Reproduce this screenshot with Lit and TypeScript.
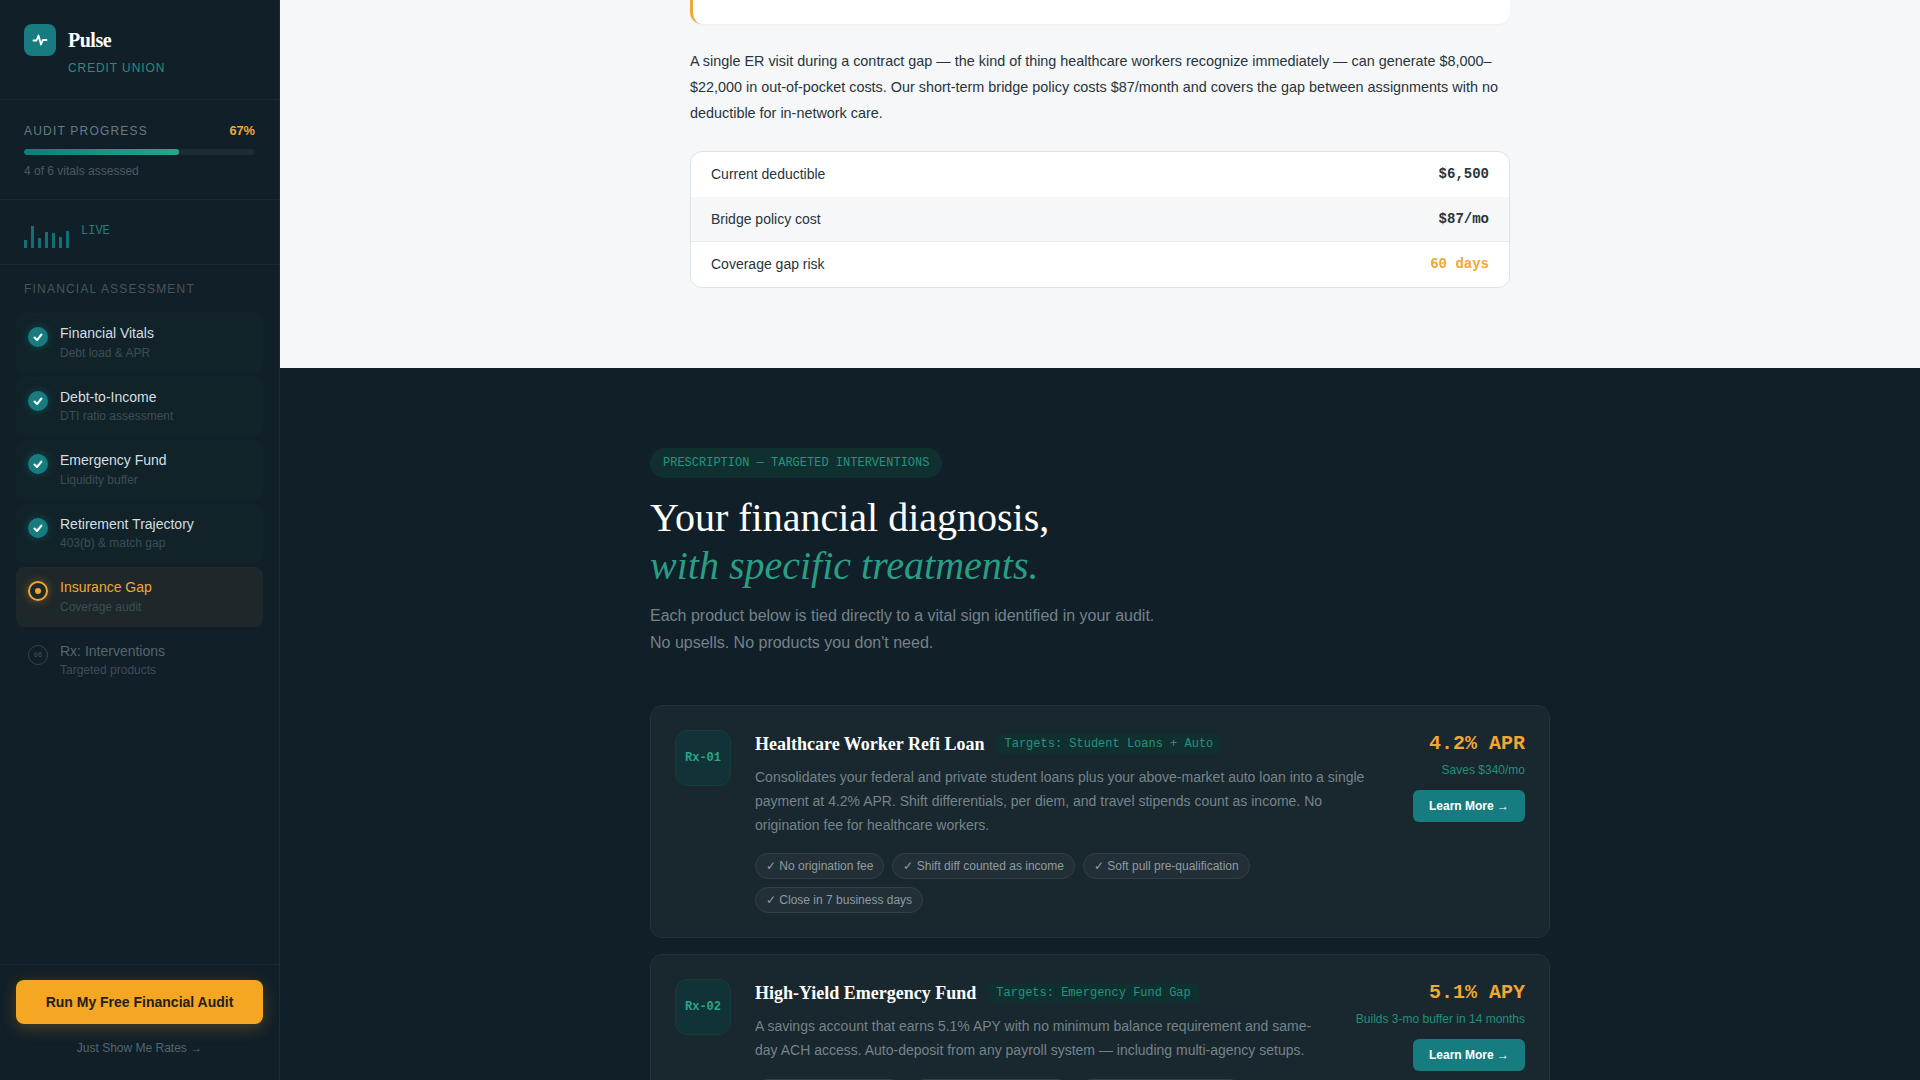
import { LitElement, html, css } from "lit";
import { customElement } from "lit/decorators.js";

const steps = [
  { t: "Financial Vitals", s: "Debt load & APR", st: "done" },
  { t: "Debt-to-Income", s: "DTI ratio assessment", st: "done" },
  { t: "Emergency Fund", s: "Liquidity buffer", st: "done" },
  { t: "Retirement Trajectory", s: "403(b) & match gap", st: "done" },
  { t: "Insurance Gap", s: "Coverage audit", st: "active" },
  { t: "Rx: Interventions", s: "Targeted products", st: "todo" },
];
const bars = [8, 22, 10, 16, 15, 11, 17];
const products = [
  {
    id: "Rx-01", name: "Healthcare Worker Refi Loan", target: "Targets: Student Loans + Auto",
    desc: "Consolidates your federal and private student loans plus your above-market auto loan into a single payment at 4.2% APR. Shift differentials, per diem, and travel stipends count as income. No origination fee for healthcare workers.",
    chips: ["No origination fee", "Shift diff counted as income", "Soft pull pre-qualification", "Close in 7 business days"],
    rate: "4.2% APR", note: "Saves $340/mo",
  },
  {
    id: "Rx-02", name: "High-Yield Emergency Fund", target: "Targets: Emergency Fund Gap",
    desc: "A savings account that earns 5.1% APY with no minimum balance requirement and same-day ACH access. Auto-deposit from any payroll system — including multi-agency setups.",
    chips: ["No minimum balance", "Same-day ACH access", "Multi-agency compatible"],
    rate: "5.1% APY", note: "Builds 3-mo buffer in 14 months",
  },
];

@customElement("app-root")
export class AppRoot extends LitElement {
  static styles = css`
    :host { display: flex; width: 100%; height: 100vh; overflow: hidden; font-family: "Liberation Sans", Arial, sans-serif; background: #f5f7f9; }
    * { box-sizing: border-box; }
    .side { flex: 0 0 280px; height: 100vh; background: #111f28; border-right: 1px solid #1d2c34; display: flex; flex-direction: column; }
    .brand { padding: 24px 24px 20px; border-bottom: 1px solid #1a2a32; height: 100px; }
    .brand-row { display: flex; align-items: center; gap: 12px; height: 32px; }
    .logo { width: 32px; height: 32px; border-radius: 8px; background: #177c80; display: flex; align-items: center; justify-content: center; }
    .pulse { font: 700 20px/24px "Liberation Serif", serif; color: #fff; letter-spacing: -0.5px; }
    .cu { margin: 3.5px 0 0 44px; font-size: 12px; line-height: 16px; letter-spacing: .9px; color: #258f7b; }
    .prog { padding: 21px 24px 0; height: 100px; border-bottom: 1px solid #1a2a32; }
    .prog-top { display: flex; justify-content: space-between; font-size: 12px; line-height: 20px; letter-spacing: 1.2px; color: #6b7a82; }
    .pct { font-size: 12.8px; font-weight: 700; color: #f0a733; letter-spacing: 0; }
    .track { height: 6px; margin-top: 8px; border-radius: 3px; background: #1d2c34; overflow: hidden; }
    .fill { width: 67%; height: 100%; border-radius: 3px; background: linear-gradient(90deg, #0f7c7c, #2aa58a); }
    .pnote { margin-top: 8px; font-size: 12px; line-height: 16px; color: #4a5a63; }
    .live { height: 65px; padding: 24px 24px 0; display: flex; gap: 12px; align-items: flex-start; border-bottom: 1px solid #1a2a32; }
    .bars { display: flex; align-items: flex-end; gap: 4px; height: 24px; }
    .bars i { width: 3px; background: #147074; display: block; }
    .livet { font: 12px/14px "Liberation Mono", monospace; color: #1d8080; }
    .title { padding: 17px 24px 0; font-size: 12px; line-height: 14px; letter-spacing: 1.2px; color: #46565f; margin-bottom: 17px; }
    .steps { display: flex; flex-direction: column; gap: 4px; padding: 0 16px; flex: 1; }
    .step { height: 59.6px; display: flex; gap: 12px; padding: 10px 12px; border-radius: 8px; }
    .step.done { background: #112329; }
    .step.active { background: #1e2729; }
    .dot { flex: 0 0 20px; width: 20px; height: 20px; margin-top: 4px; border-radius: 50%; display: flex; align-items: center; justify-content: center; }
    .done .dot { background: #177c80; box-shadow: 0 0 10px rgba(23, 124, 128, .45); }
    .active .dot { border: 2px solid #f0a733; box-shadow: 0 0 10px rgba(240, 167, 51, .4); }
    .active .dot b { width: 6px; height: 6px; border-radius: 50%; background: #f0a733; }
    .todo .dot { border: 1.5px solid #35454d; color: #46565f; font: 7px "Liberation Mono", monospace; }
    .st { font-size: 14px; line-height: 20px; color: #d5dee2; }
    .ss { font-size: 12px; line-height: 16px; margin-top: 1.5px; color: #3d4d56; }
    .active .st { color: #f0a733; }
    .todo .st { color: #55656e; }
    .foot { height: 116px; padding: 15px 16px 0; border-top: 1px solid #1a2a32; text-align: center; }
    .cta { width: 100%; height: 44px; border: 0; border-radius: 8px; background: #f5a623; color: #241f14; font: 700 14px "Liberation Sans", sans-serif; box-shadow: 0 4px 16px rgba(245, 166, 35, .25); }
    .rates { margin-top: 16px; font-size: 12px; line-height: 16px; color: #55656e; }

    .main { flex: 1; min-width: 0; height: 100vh; overflow: hidden; }
    .light { background: #f5f7f9; padding-bottom: 80px; }
    .wrap-l { width: 820px; margin: 0 auto; }
    .cut { height: 23.5px; background: #fff; border-left: 3px solid #f0a733; border-radius: 0 0 12px 12px; box-shadow: 0 1px 3px rgba(0, 0, 0, .04); }
    .para { margin: 24.5px 0 25px; font-size: 14.4px; line-height: 26px; color: #27343b; }
    .tbl { background: #fff; border: 1px solid #dde3e7; border-radius: 12px; overflow: hidden; }
    .row { height: 45px; display: flex; justify-content: space-between; align-items: center; padding: 0 20px 1px; font-size: 14px; color: #27343b; border-bottom: 1px solid #e8ecef; }
    .row:last-child { border-bottom: 0; }
    .row:nth-child(2) { background: #f5f7f9; }
    .row:first-child { border-bottom: 0; }
    .val { font: 700 14px "Liberation Mono", monospace; color: #27343b; }
    .val.warn { color: #f0a733; }

    .dark { background: #111f28; padding: 80px 0 60px; }
    .wrap-d { width: 900px; margin: 0 auto; }
    .pill { display: inline-block; padding: 8px 13px; border-radius: 15px; background: #10302f; font: 12px/14px "Liberation Mono", monospace; color: #249480; vertical-align: top; }
    h2 { margin: 16px 0 12px; font: 400 40px/48px "Liberation Serif", serif; color: #fff; }
    h2 em { color: #2a9d85; display: block; }
    .sub { margin: 0 0 49px; font-size: 16px; line-height: 27px; color: #758289; }
    .cards { display: flex; flex-direction: column; gap: 16px; }
    .card { display: flex; gap: 24px; padding: 24px; border: 1px solid #22323a; border-radius: 12px; background: #19272e; }
    .badge { flex: 0 0 56px; height: 56px; border-radius: 12px; border: 1px solid #143c3e; background: #113338; display: flex; align-items: center; justify-content: center; font: 700 12px "Liberation Mono", monospace; color: #2aa58a; }
    .body { flex: 1; min-width: 0; }
    .head { display: flex; align-items: center; gap: 12px; height: 28px; }
    .name { font: 700 18px "Liberation Serif", serif; color: #fff; }
    .tag { padding: 2px 8px; border-radius: 4px; background: #10302f; font: 12px/16px "Liberation Mono", monospace; color: #249480; }
    .desc { margin: 8px 0 16px; font-size: 14px; line-height: 23.8px; color: #75848b; }
    .chips { display: flex; flex-wrap: wrap; gap: 8px; }
    .chip { height: 26px; padding: 0 10px; display: flex; align-items: center; border-radius: 13px; border: 1px solid #333f47; background: #222f36; font-size: 12px; color: #8f9ba1; }
    .right { flex: none; display: flex; flex-direction: column; align-items: flex-end; }
    .rate { margin-top: 1px; font: 700 20px/26px "Liberation Mono", monospace; color: #f0a733; }
    .note { margin-top: 5px; font-size: 12px; line-height: 16px; color: #22907a; }
    .learn { margin-top: 12px; width: 112px; height: 32px; border: 0; border-radius: 6px; background: #177c80; color: #fff; font: 700 12px "Liberation Sans", sans-serif; }
  `;

  private dot(st: string) {
    if (st === "done")
      return html`<svg width="12" height="12" viewBox="0 0 12 12" fill="none" stroke="#fff" stroke-width="2" stroke-linecap="round" stroke-linejoin="round"><path d="M2.5 6.5 5 9l4.5-5.5" /></svg>`;
    if (st === "active") return html`<b></b>`;
    return html`06`;
  }

  render() {
    return html`
      <aside class="side">
        <div class="brand">
          <div class="brand-row">
            <div class="logo">
              <svg width="16" height="16" viewBox="0 0 16 16" fill="none" stroke="#fff" stroke-width="1.8" stroke-linecap="round" stroke-linejoin="round"><path d="M1.5 8.5h3l2-5 2.5 9 1.8-4.5h3.7" /></svg>
            </div>
            <div class="pulse">Pulse</div>
          </div>
          <div class="cu">CREDIT UNION</div>
        </div>
        <div class="prog">
          <div class="prog-top"><span>AUDIT PROGRESS</span><span class="pct">67%</span></div>
          <div class="track"><div class="fill"></div></div>
          <div class="pnote">4 of 6 vitals assessed</div>
        </div>
        <div class="live">
          <div class="bars">${bars.map((h) => html`<i style="height:${h}px"></i>`)}</div>
          <div class="livet">LIVE</div>
        </div>
        <div class="title">FINANCIAL ASSESSMENT</div>
        <div class="steps">
          ${steps.map((s) => html`
            <div class="step ${s.st}">
              <div class="dot">${this.dot(s.st)}</div>
              <div><div class="st">${s.t}</div><div class="ss">${s.s}</div></div>
            </div>`)}
        </div>
        <div class="foot">
          <button class="cta">Run My Free Financial Audit</button>
          <div class="rates">Just Show Me Rates →</div>
        </div>
      </aside>
      <main class="main">
        <section class="light">
          <div class="wrap-l">
            <div class="cut"></div>
            <p class="para">A single ER visit during a contract gap — the kind of thing healthcare workers recognize immediately — can generate $8,000–$22,000 in out-of-pocket costs. Our short-term bridge policy costs $87/month and covers the gap between assignments with no deductible for in-network care.</p>
            <div class="tbl">
              <div class="row"><span>Current deductible</span><span class="val">$6,500</span></div>
              <div class="row"><span>Bridge policy cost</span><span class="val">$87/mo</span></div>
              <div class="row"><span>Coverage gap risk</span><span class="val warn">60 days</span></div>
            </div>
          </div>
        </section>
        <section class="dark">
          <div class="wrap-d">
            <span class="pill">PRESCRIPTION — TARGETED INTERVENTIONS</span>
            <h2>Your financial diagnosis,<em>with specific treatments.</em></h2>
            <p class="sub">Each product below is tied directly to a vital sign identified in your audit.<br />No upsells. No products you don't need.</p>
            <div class="cards">
              ${products.map((p) => html`
                <article class="card">
                  <div class="badge">${p.id}</div>
                  <div class="body">
                    <div class="head"><span class="name">${p.name}</span><span class="tag">${p.target}</span></div>
                    <p class="desc">${p.desc}</p>
                    <div class="chips">${p.chips.map((c) => html`<span class="chip">✓ ${c}</span>`)}</div>
                  </div>
                  <div class="right">
                    <div class="rate">${p.rate}</div>
                    <div class="note">${p.note}</div>
                    <button class="learn">Learn More →</button>
                  </div>
                </article>`)}
            </div>
          </div>
        </section>
      </main>
    `;
  }
}
